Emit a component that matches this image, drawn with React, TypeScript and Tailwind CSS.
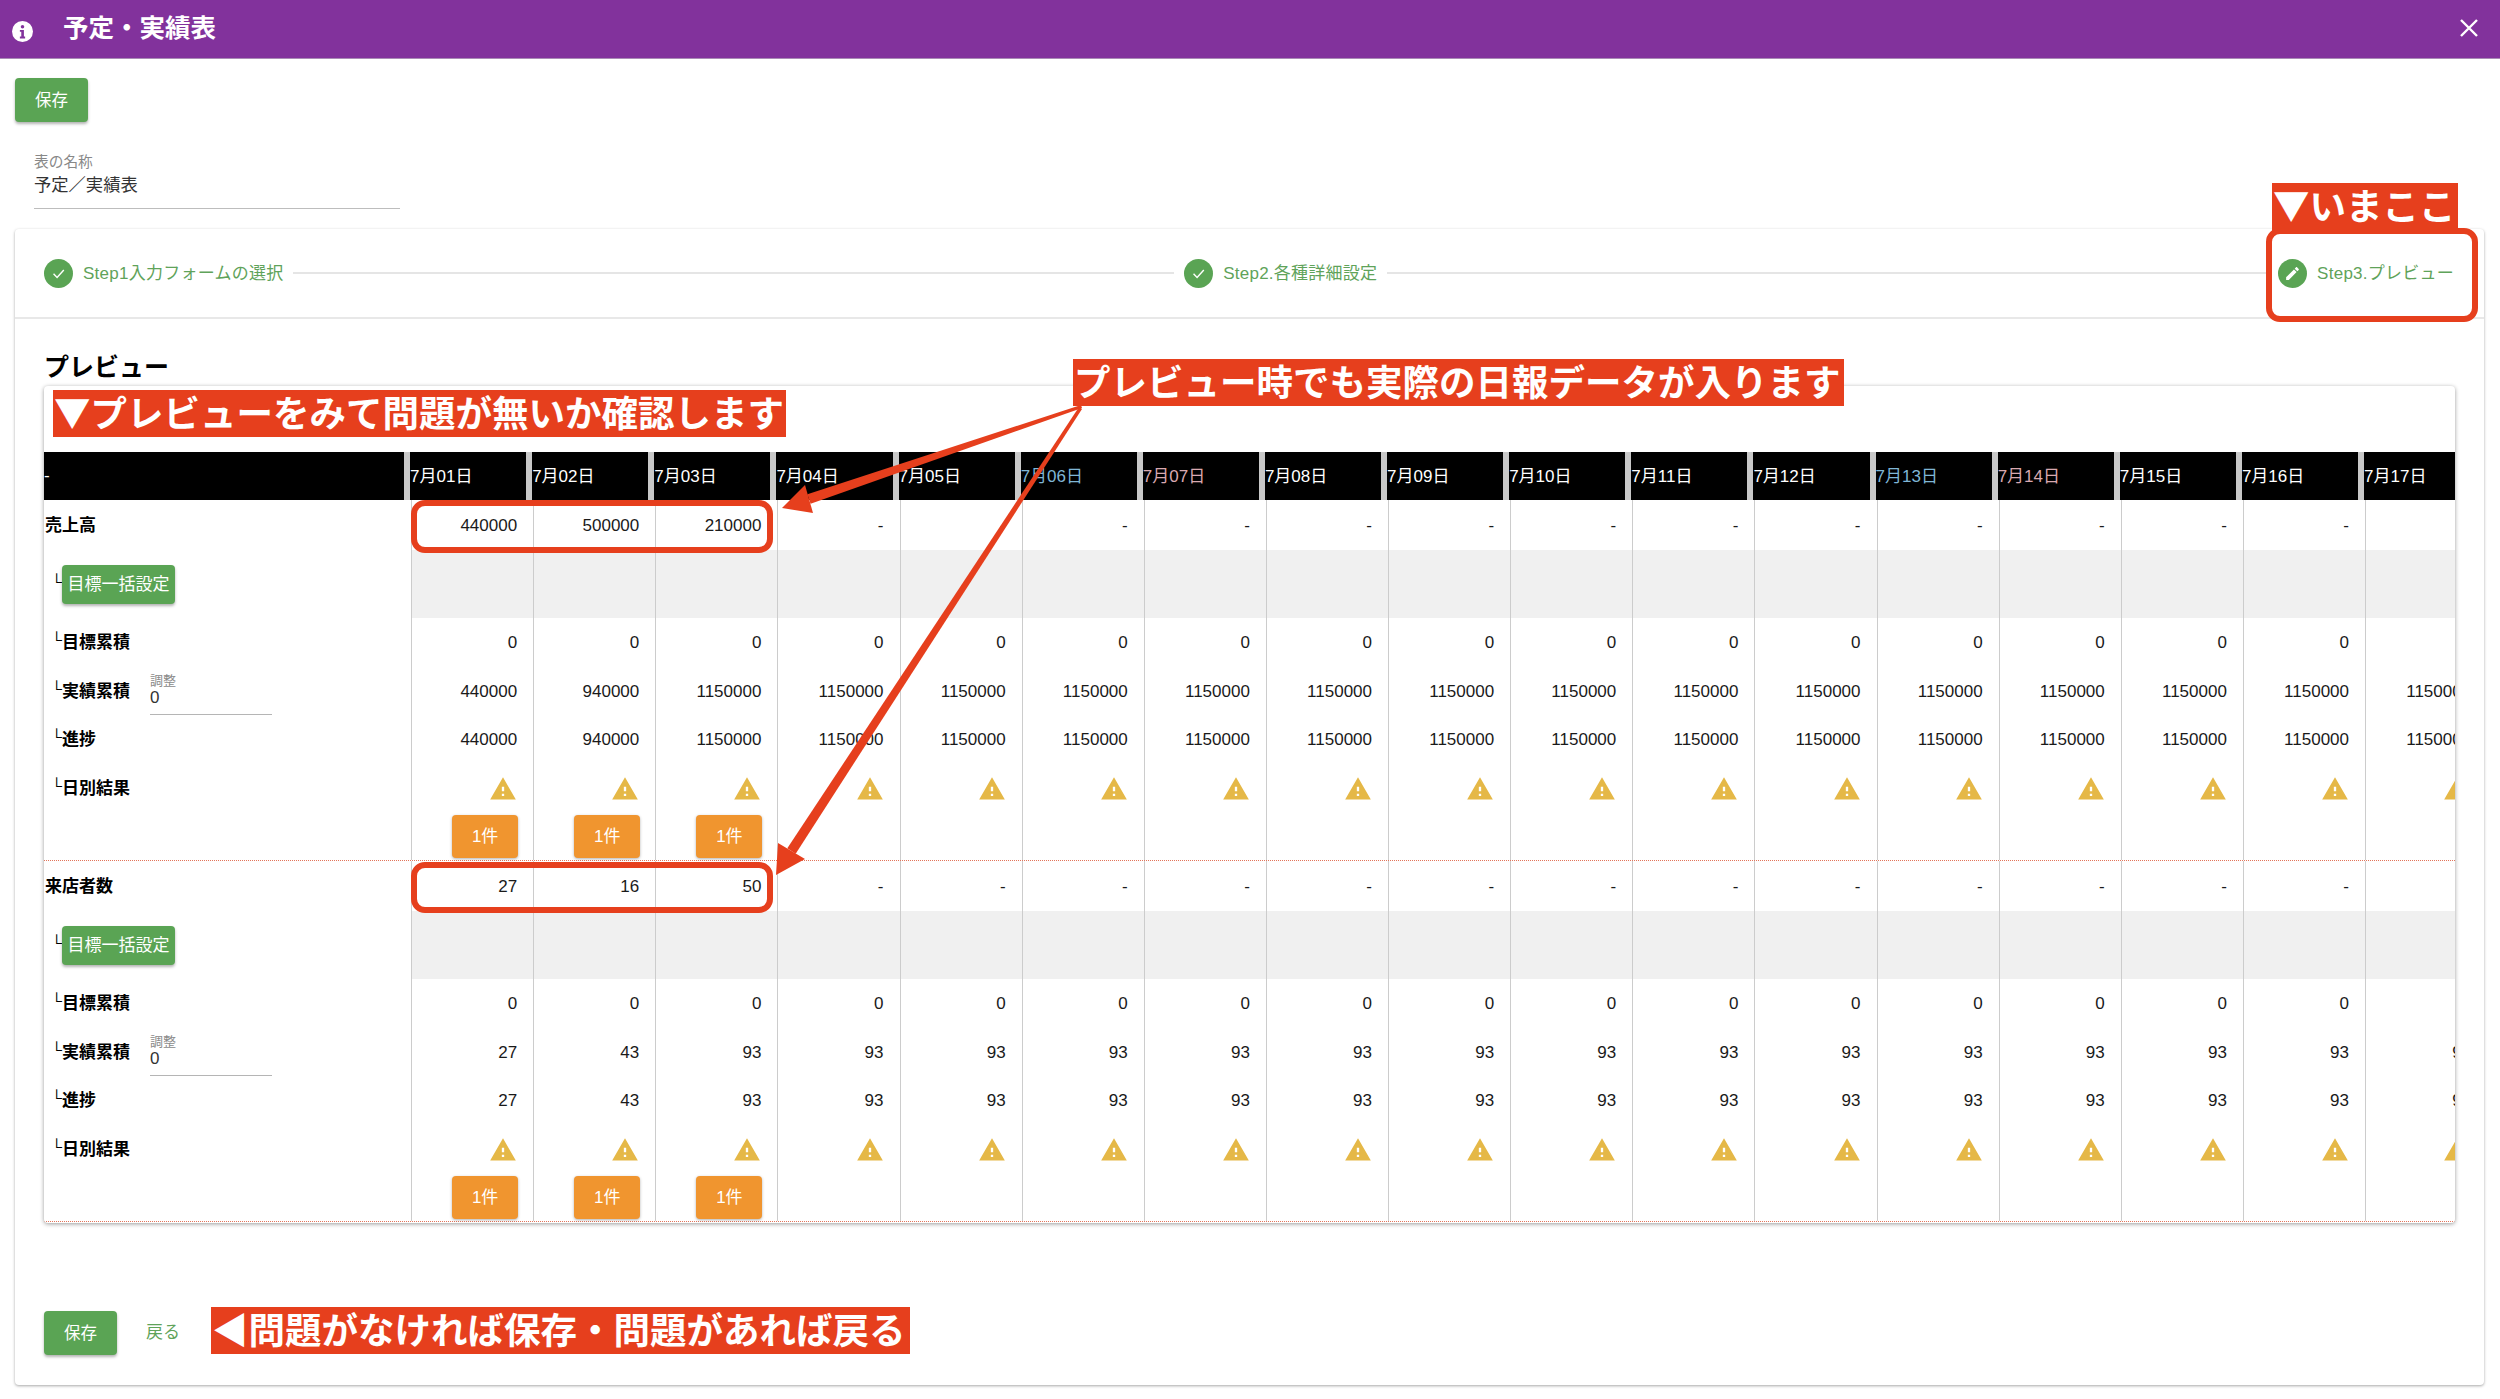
import React from "react";

const days = Array.from({ length: 17 }, (_, i) => i + 1);

function headColor(d: number) {
  if (d === 6 || d === 13) return "text-[#7fb6d6]";
  if (d === 7 || d === 14) return "text-[#d9a9b0]";
  return "text-white";
}

function Warn() {
  return (
    <svg viewBox="0 0 24 24" className="w-[28px] h-[28px]" fill="#e5b847">
      <path d="M1 21h22L12 2 1 21zm12-3h-2v-2h2v2zm0-4h-2v-4h2v4z" />
    </svg>
  );
}

function Cell({ children, band }: { children?: React.ReactNode; band?: boolean }) {
  return (
    <div
      className={`w-[122.125px] shrink-0 border-l border-[#cccccc] pr-[16px] pt-px flex items-center justify-end text-[17px] text-[#1a1a1a] ${
        band ? "bg-[#f0f0f0]" : ""
      }`}
    >
      {children}
    </div>
  );
}

function Tick() {
  return <span className="inline-block w-[17px] text-right font-normal text-[15px] leading-[15px] -mt-[7px]">└</span>;
}

function Sub({ text }: { text: string }) {
  return (
    <span className="flex items-center whitespace-nowrap">
      <Tick />
      {text}
    </span>
  );
}

function Row({
  h,
  label,
  children,
}: {
  h: string;
  label?: React.ReactNode;
  children: React.ReactNode;
}) {
  return (
    <div className={`flex ${h}`}>
      <div className="w-[367px] shrink-0 pl-px pt-px flex items-center font-bold text-[17px] text-black">{label}</div>
      {children}
    </div>
  );
}

function Group({ actual, cum, title }: { actual: number[]; cum: number[]; title: string }) {
  return (
    <div className="border-b border-dotted border-[#e2745a]">
      <Row h="h-[50px]" label={title}>
        {days.map((d) => (
          <Cell key={d}>{d <= 3 ? actual[d - 1] : "-"}</Cell>
        ))}
      </Row>
      <Row
        h="h-[68px]"
        label={
          <div className="flex items-center">
            <Tick />
            <button className="h-[39px] w-[113px] rounded-[4px] bg-[#5aa454] text-white font-normal text-[17px] shadow-[0_2px_3px_rgba(0,0,0,0.3)]">
              目標一括設定
            </button>
          </div>
        }
      >
        {days.map((d) => (
          <Cell key={d} band />
        ))}
      </Row>
      <Row h="h-[49px]" label={<Sub text="目標累積" />}>
        {days.map((d) => (
          <Cell key={d}>0</Cell>
        ))}
      </Row>
      <Row
        h="h-[48px]"
        label={
          <div className="flex items-center">
            <span className="w-[105px]">
              <Sub text="実績累積" />
            </span>
            <div className="w-[122px] h-[47px] border-b border-[#b5b5b5] font-normal pt-[6px]">
              <div className="text-[13px] leading-[14px] text-[#8a8a8a]">調整</div>
              <div className="text-[17px] leading-[20px] text-[#333333]">0</div>
            </div>
          </div>
        }
      >
        {days.map((d) => (
          <Cell key={d}>{cum[Math.min(d - 1, 2)]}</Cell>
        ))}
      </Row>
      <Row h="h-[49px]" label={<Sub text="進捗" />}>
        {days.map((d) => (
          <Cell key={d}>{cum[Math.min(d - 1, 2)]}</Cell>
        ))}
      </Row>
      <Row h="h-[48px]" label={<Sub text="日別結果" />}>
        {days.map((d) => (
          <Cell key={d}>
            <Warn />
          </Cell>
        ))}
      </Row>
      <Row h="h-[48px]">
        {days.map((d) => (
          <Cell key={d}>
            {d <= 3 && (
              <button className="w-[66px] h-[43px] -mr-px rounded-[4px] bg-[#f0952f] text-white text-[17px] shadow-[0_1px_3px_rgba(0,0,0,0.3)]">
                1件
              </button>
            )}
          </Cell>
        ))}
      </Row>
    </div>
  );
}

function CheckCircle({ edit }: { edit?: boolean }) {
  return (
    <span className="w-[29px] h-[29px] shrink-0 rounded-full bg-[#5aa454] flex items-center justify-center">
      {edit ? (
        <svg viewBox="0 0 24 24" className="w-[17px] h-[17px]" fill="white">
          <path d="M3 17.25V21h3.75L17.81 9.94l-3.75-3.75L3 17.25zM20.71 7.04c.39-.39.39-1.02 0-1.41l-2.34-2.34c-.39-.39-1.02-.39-1.41 0l-1.83 1.83 3.75 3.75 1.83-1.83z" />
        </svg>
      ) : (
        <svg viewBox="0 0 24 24" className="w-[17px] h-[17px]" fill="none" stroke="white" strokeWidth="2">
          <path d="M5 12.5l5 5L19.5 7" />
        </svg>
      )}
    </span>
  );
}

const noteClass =
  "absolute bg-[#e63f1d] text-white font-bold font-['Noto_Sans_CJK_JP'] text-[36.5px] leading-none whitespace-nowrap flex items-center px-[1px] pb-[3px]";

export default function App() {
  return (
    <div
      lang="ja"
      className="relative w-[2500px] h-[1399px] overflow-hidden bg-white"
      style={{ fontFamily: '"Liberation Sans","Noto Sans CJK JP",sans-serif' }}
    >
      <header className="h-[59px] bg-[#82329c] flex items-center justify-between pl-[12px] pr-[22px] border-b border-[#a98bb5]">
        <div className="flex items-center">
          <svg viewBox="0 0 24 24" className="w-[21px] h-[21px] mt-[4px]">
            <circle cx="12" cy="12" r="12" fill="white" />
            <circle cx="12" cy="6.5" r="2" fill="#82329c" />
            <path d="M9 10.2h4.6v7.6H15v2.2H9v-2.2h1.6v-5.4H9z" fill="#82329c" />
          </svg>
          <h1 className="ml-[30px] text-[25.5px] font-bold text-white leading-none">予定・実績表</h1>
        </div>
        <svg viewBox="0 0 18 18" className="w-[18px] h-[18px] -mt-[3px]" stroke="white" strokeWidth="2.4">
          <path d="M1 1l16 16M17 1L1 17" />
        </svg>
      </header>

      <main className="pl-[15px] pr-[16px]">
        <button className="mt-[19px] block w-[73px] h-[44px] rounded-[4px] bg-[#5aa454] text-white text-[16.5px] shadow-[0_2px_3px_rgba(0,0,0,0.3)]">
          保存
        </button>
        <div className="ml-[19px] mt-[31px] w-[366px] h-[56px] border-b border-[#bdbdbd]">
          <div className="text-[14.7px] leading-[18px] text-[#888888]">表の名称</div>
          <div className="mt-[3px] text-[17.3px] leading-[22px] text-[#333333]">予定／実績表</div>
        </div>

        <section className="mt-[20px] h-[1156px] rounded-[4px] bg-white shadow-[0_1px_3px_rgba(0,0,0,0.35)]">
          <div className="h-[90px] border-b-2 border-[#e8e8e8] pl-[29px] pr-[30px] flex items-center gap-[10px] text-[17px] tracking-[0.25px] text-[#5fa35a]">
            <CheckCircle />
            <span className="whitespace-nowrap pt-px">Step1入力フォームの選択</span>
            <span className="flex-1 h-[2px] bg-[#e5e5e5]" />
            <CheckCircle />
            <span className="whitespace-nowrap pt-px">Step2.各種詳細設定</span>
            <span className="flex-1 h-[2px] bg-[#e5e5e5]" />
            <CheckCircle edit />
            <span className="whitespace-nowrap pt-px">Step3.プレビュー</span>
          </div>

          <h2 className="h-[67px] pl-[29px] pt-[34px] text-[25px] font-bold leading-[28px] text-black">プレビュー</h2>

          <div className="ml-[29px] w-[2411px] h-[837px] overflow-hidden rounded-[4px] shadow-[0_1px_4px_rgba(0,0,0,0.4)] pt-[66px]">
            <div className="flex h-[48px] w-max">
              <div className="w-[360px] bg-black text-white text-[17px] flex items-center">-</div>
              {days.map((d) => (
                <div
                  key={d}
                  className={`w-[122.125px] shrink-0 border-l-[6px] border-[#c8c8c8] bg-black pt-px flex items-center text-[17px] whitespace-nowrap ${headColor(d)}`}
                >
                  7月{String(d).padStart(2, "0")}日
                </div>
              ))}
            </div>
            <div className="w-max">
              <Group title="売上高" actual={[440000, 500000, 210000]} cum={[440000, 940000, 1150000]} />
              <Group title="来店者数" actual={[27, 16, 50]} cum={[27, 43, 93]} />
            </div>
          </div>

          <div className="ml-[29px] mt-[88px] flex items-center">
            <button className="w-[73px] h-[44px] rounded-[4px] bg-[#5aa454] text-white text-[16.5px] shadow-[0_2px_3px_rgba(0,0,0,0.3)]">
              保存
            </button>
            <span className="ml-[29px] text-[17px] text-[#5fa35a]">戻る</span>
          </div>
        </section>
      </main>

      <svg className="absolute left-0 top-0 w-[2500px] h-[1399px] pointer-events-none" viewBox="0 0 2500 1399" fill="#e63f1d">
        <polygon points="1081,405 1082,408 810.6,503.7 807.4,494.3" />
        <polygon points="782,508 805,485 813,513" />
        <polygon points="1079,407 1082,409 795.7,853.7 787.3,848.3" />
        <polygon points="776,875 778,843 805,859" />
      </svg>

      <div className="absolute left-[411px] top-[500px] w-[362px] h-[53px] border-[6px] border-[#e63f1d] rounded-[14px]" />
      <div className="absolute left-[411px] top-[862px] w-[362px] h-[51px] border-[6px] border-[#e63f1d] rounded-[14px]" />
      <div className="absolute left-[2266px] top-[228px] w-[212px] h-[94px] border-[6px] border-[#e63f1d] rounded-[14px]" />

      <div className={`${noteClass} left-[2272px] top-[183px] w-[186px] h-[48px]`}>▼いまここ</div>
      <div className={`${noteClass} left-[53px] top-[390px] w-[733px] h-[47px]`}>▼プレビューをみて問題が無いか確認します</div>
      <div className={`${noteClass} left-[1073px] top-[359px] w-[771px] h-[47px]`}>プレビュー時でも実際の日報データが入ります</div>
      <div className={`${noteClass} left-[211px] top-[1307px] w-[699px] h-[47px]`}>◀問題がなければ保存・問題があれば戻る</div>
    </div>
  );
}
